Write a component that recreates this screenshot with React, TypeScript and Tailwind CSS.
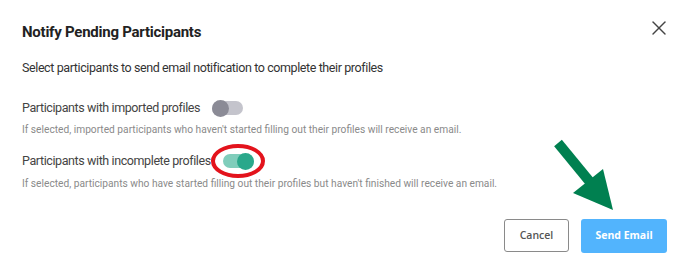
import { X } from "lucide-react";

function Toggle({ on }: { on: boolean }) {
  return (
    <span
      className={`relative inline-flex h-[14px] w-[31px] shrink-0 items-center rounded-full ${
        on ? "bg-[#80cdbb]" : "bg-[#c4c4cc]"
      }`}
    >
      <span
        className={`absolute h-[17px] w-[17px] rounded-full ${
          on ? "right-0 bg-[#2aa88b]" : "left-0 bg-[#8b8b96]"
        }`}
      />
    </span>
  );
}

export default function App() {
  return (
    <div className="relative h-[273px] w-[688px] bg-white font-['Roboto',sans-serif]">
      <div className="flex flex-col px-[22px] pt-[22px]">
        <div className="flex items-start justify-between">
          <h2 className="text-[15px] font-bold leading-[20px] tracking-[-0.25px] text-[#222]">
            Notify Pending Participants
          </h2>
          <button className="mr-[-5px] mt-[-6px] text-[#444]" aria-label="Close">
            <X className="h-[24px] w-[24px]" strokeWidth={1.4} />
          </button>
        </div>

        <p className="mt-[17px] text-[12.5px] leading-[18px] tracking-[-0.4px] text-[#333]">
          Select participants to send email notification to complete their profiles
        </p>

        <div className="mt-[22px] flex items-center gap-[12px]">
          <span className="text-[12.5px] leading-[18px] tracking-[-0.4px] text-[#444]">
            Participants with imported profiles
          </span>
          <Toggle on={false} />
        </div>
        <p className="mt-[6px] text-[10.2px] leading-[14px] text-[#8a8a8a]">
          If selected, imported participants who haven't started filling out their profiles will receive an email.
        </p>

        <div className="mt-[15px] flex items-center gap-[12px]">
          <span className="text-[12.5px] leading-[18px] tracking-[-0.4px] text-[#444]">
            Participants with incomplete profiles
          </span>
          <Toggle on={true} />
        </div>
        <p className="mt-[7px] text-[10.2px] leading-[14px] text-[#8a8a8a]">
          If selected, participants who have started filling out their profiles but haven't finished will receive an email.
        </p>

        <div className="mt-[28px] flex justify-end gap-[12px]">
          <button className="h-[33px] w-[65px] rounded-[3px] border border-[#8a8a8a] bg-white font-['Open_Sans',sans-serif] text-[10.5px] font-semibold text-[#555]">
            Cancel
          </button>
          <button className="mr-[-1px] h-[34px] w-[86px] rounded-[3px] bg-[#52b4fd] font-['Open_Sans',sans-serif] text-[10.5px] font-bold text-white">
            Send Email
          </button>
        </div>
      </div>

      {/* annotations drawn over the dialog */}
      <svg className="pointer-events-none absolute left-0 top-0" width="688" height="273" viewBox="0 0 688 273">
        <ellipse cx="238" cy="161" rx="25" ry="15" fill="none" stroke="#e3131c" strokeWidth="4" />
        <line x1="558" y1="143" x2="590" y2="182" stroke="#008050" strokeWidth="10" />
        <polygon points="573,193 603,169 613,210" fill="#008050" />
      </svg>
    </div>
  );
}
